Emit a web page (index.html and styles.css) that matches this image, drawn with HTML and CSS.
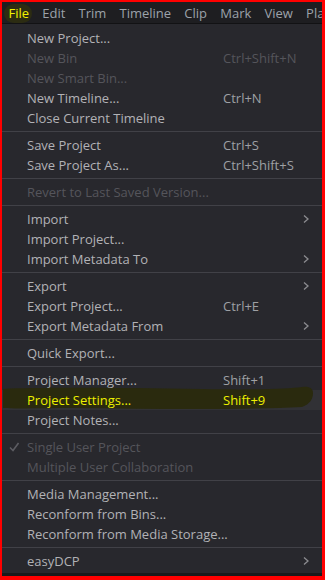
FILE: index.html
```html
<!DOCTYPE html>
<html>
<head>
<meta charset="utf-8">
<link rel="stylesheet" href="styles.css">
</head>
<body>
<div class="screen">
  <div class="menubar">
    <span class="mb-item mb-active"><span class="blob"></span><span class="mb-text">File</span></span>
    <span class="mb-item">Edit</span>
    <span class="mb-item">Trim</span>
    <span class="mb-item">Timeline</span>
    <span class="mb-item">Clip</span>
    <span class="mb-item">Mark</span>
    <span class="mb-item">View</span>
    <span class="mb-item">Playback</span>
  </div>
  <div class="menu">
    <div class="item"><span class="chk"></span><span class="lbl">New Project...</span><span class="sc"></span><span class="arr"></span></div>
    <div class="item dis"><span class="chk"></span><span class="lbl">New Bin</span><span class="sc">Ctrl+Shift+N</span><span class="arr"></span></div>
    <div class="item dis"><span class="chk"></span><span class="lbl">New Smart Bin...</span><span class="sc"></span><span class="arr"></span></div>
    <div class="item"><span class="chk"></span><span class="lbl">New Timeline...</span><span class="sc">Ctrl+N</span><span class="arr"></span></div>
    <div class="item"><span class="chk"></span><span class="lbl">Close Current Timeline</span><span class="sc"></span><span class="arr"></span></div>
    <div class="sep"></div>
    <div class="item"><span class="chk"></span><span class="lbl">Save Project</span><span class="sc">Ctrl+S</span><span class="arr"></span></div>
    <div class="item"><span class="chk"></span><span class="lbl">Save Project As...</span><span class="sc">Ctrl+Shift+S</span><span class="arr"></span></div>
    <div class="sep"></div>
    <div class="item dis"><span class="chk"></span><span class="lbl">Revert to Last Saved Version...</span><span class="sc"></span><span class="arr"></span></div>
    <div class="sep"></div>
    <div class="item"><span class="chk"></span><span class="lbl">Import</span><span class="sc"></span><span class="arr"><svg viewBox="0 0 8 10" width="8" height="10"><path d="M2 1.5 L6 5 L2 8.5" fill="none" stroke="#8c8c90" stroke-width="1.3"/></svg></span></div>
    <div class="item"><span class="chk"></span><span class="lbl">Import Project...</span><span class="sc"></span><span class="arr"></span></div>
    <div class="item"><span class="chk"></span><span class="lbl">Import Metadata To</span><span class="sc"></span><span class="arr"><svg viewBox="0 0 8 10" width="8" height="10"><path d="M2 1.5 L6 5 L2 8.5" fill="none" stroke="#8c8c90" stroke-width="1.3"/></svg></span></div>
    <div class="sep"></div>
    <div class="item"><span class="chk"></span><span class="lbl">Export</span><span class="sc"></span><span class="arr"><svg viewBox="0 0 8 10" width="8" height="10"><path d="M2 1.5 L6 5 L2 8.5" fill="none" stroke="#8c8c90" stroke-width="1.3"/></svg></span></div>
    <div class="item"><span class="chk"></span><span class="lbl">Export Project...</span><span class="sc">Ctrl+E</span><span class="arr"></span></div>
    <div class="item"><span class="chk"></span><span class="lbl">Export Metadata From</span><span class="sc"></span><span class="arr"><svg viewBox="0 0 8 10" width="8" height="10"><path d="M2 1.5 L6 5 L2 8.5" fill="none" stroke="#8c8c90" stroke-width="1.3"/></svg></span></div>
    <div class="sep"></div>
    <div class="item"><span class="chk"></span><span class="lbl">Quick Export...</span><span class="sc"></span><span class="arr"></span></div>
    <div class="sep"></div>
    <div class="item"><span class="chk"></span><span class="lbl">Project Manager...</span><span class="sc">Shift+1</span><span class="arr"></span></div>
    <div class="item hot">
      <svg class="marker" viewBox="0 0 320 26" width="320" height="26" preserveAspectRatio="none"><path d="M1 3 C40 1 120 2 200 3 C250 4 285 3 300 1 C307 0 311 2 311 7 C311 13 308 18 300 21 C240 24 150 23 70 22 C40 22 15 23 1 22 Z" fill="#2a2a0e"/></svg>
      <span class="chk"></span><span class="lbl">Project Settings...</span><span class="sc">Shift+9</span><span class="arr"></span>
    </div>
    <div class="item"><span class="chk"></span><span class="lbl">Project Notes...</span><span class="sc"></span><span class="arr"></span></div>
    <div class="sep"></div>
    <div class="item dis"><span class="chk"><svg viewBox="0 0 10 10" width="10" height="10"><path d="M1 5.5 L4 8.5 L9.5 1" fill="none" stroke="#5c5c62" stroke-width="1.6"/></svg></span><span class="lbl">Single User Project</span><span class="sc"></span><span class="arr"></span></div>
    <div class="item dis"><span class="chk"></span><span class="lbl">Multiple User Collaboration</span><span class="sc"></span><span class="arr"></span></div>
    <div class="sep"></div>
    <div class="item"><span class="chk"></span><span class="lbl">Media Management...</span><span class="sc"></span><span class="arr"></span></div>
    <div class="item"><span class="chk"></span><span class="lbl">Reconform from Bins...</span><span class="sc"></span><span class="arr"></span></div>
    <div class="item"><span class="chk"></span><span class="lbl">Reconform from Media Storage...</span><span class="sc"></span><span class="arr"></span></div>
    <div class="sep"></div>
    <div class="item"><span class="chk"></span><span class="lbl">easyDCP</span><span class="sc"></span><span class="arr"><svg viewBox="0 0 8 10" width="8" height="10"><path d="M2 1.5 L6 5 L2 8.5" fill="none" stroke="#8c8c90" stroke-width="1.3"/></svg></span></div>
  </div>
  <div class="under"></div>
</div>
</body>
</html>
```

FILE: styles.css
```css
html, body {
  margin: 0;
  padding: 0;
  background: #ff0000;
}
.screen {
  width: 325px;
  height: 580px;
  box-sizing: border-box;
  border-style: solid;
  border-color: #ff0000;
  border-width: 2px 3px 4px 2px;
  background: #28282d;
  display: flex;
  flex-direction: column;
  overflow: hidden;
  font-family: "Open Sans", "Noto Sans", sans-serif;
  font-size: 13px;
}
.menubar {
  height: 21px;
  flex: none;
  background: #1e1e21;
  border-bottom: 1px solid #121214;
  display: flex;
  align-items: center;
  white-space: nowrap;
  overflow: hidden;
  color: #9ca2aa;
  padding-left: 6.5px;
  gap: 13.2px;
}
.mb-item {
  position: relative;
  line-height: 20px;
}
.mb-active .blob {
  position: absolute;
  left: -5px;
  top: 1px;
  width: 28px;
  height: 19px;
  border-radius: 10px;
  background: #2c2c12;
}
.mb-active .mb-text {
  position: relative;
  color: #f2f200;
}
.menu {
  flex: 1;
  padding-top: 4px;
  display: flex;
  flex-direction: column;
}
.item {
  position: relative;
  height: 20px;
  display: grid;
  grid-template-columns: 25px 196px 1fr 20px;
  align-items: center;
  color: #b2b2b6;
  white-space: nowrap;
  line-height: 20px;
}
.item.dis {
  color: #55555b;
}
.sc {
  color: #9ea0a4;
}
.item.dis .sc {
  color: #55555b;
}
.chk {
  display: flex;
  justify-content: flex-end;
  padding-right: 8px;
  align-items: center;
}
.arr {
  display: flex;
  align-items: center;
}
.item.hot {
  background: #313135;
}
.item.hot .lbl, .item.hot .sc {
  position: relative;
  color: #eef000;
}
.marker {
  position: absolute;
  left: 0;
  top: -4px;
}
.sep {
  height: 1px;
  margin: 3px 0;
  background: #414147;
}
.under {
  height: 3px;
  flex: none;
  background: #19191b;
}
```
